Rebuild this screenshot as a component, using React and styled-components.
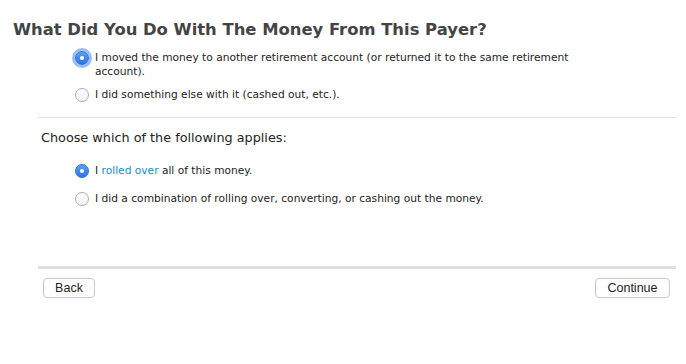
import React, { useState } from 'react';
import styled, { createGlobalStyle } from 'styled-components';

const GlobalStyle = createGlobalStyle`
  html, body {
    margin: 0;
    padding: 0;
    background: #fff;
  }
  body {
    font-family: 'DejaVu Sans', 'Liberation Sans', sans-serif;
    color: #222;
  }
`;

const Page = styled.div`
  width: 686px;
  height: 364px;
  background: #fff;
`;

const Title = styled.h1`
  margin: 0;
  padding: 19px 0 0 13px;
  font-size: 16.4px;
  line-height: 22px;
  font-weight: bold;
  color: #444;
`;

const Section = styled.div`
  margin-left: 38px;
  width: 638px;
`;

const OptionList = styled.div`
  display: flex;
  flex-direction: column;
  gap: ${(props) => props.gap}px;
  margin-top: ${(props) => props.top}px;
  padding-left: 37px;
`;

const Option = styled.label`
  display: flex;
  align-items: flex-start;
  gap: 6px;
  font-size: 10.65px;
  line-height: 14px;
  color: #222;
  cursor: pointer;
  max-width: 500px;
`;

const Radio = styled.span`
  flex: none;
  box-sizing: border-box;
  width: 14px;
  height: 14px;
  border-radius: 50%;
  display: flex;
  align-items: center;
  justify-content: center;
  background: ${(props) =>
    props.checked
      ? 'linear-gradient(#5aa0f7, #2f74e6)'
      : 'linear-gradient(#fff, #f3f3f3)'};
  border: 1px solid ${(props) => (props.checked ? '#2d6fd8' : '#adadad')};
  box-shadow: ${(props) =>
    props.focused ? '0 0 0 3px rgba(96, 156, 240, 0.65)' : 'none'};

  &::after {
    content: '';
    width: 4px;
    height: 4px;
    border-radius: 50%;
    background: #fff;
    display: ${(props) => (props.checked ? 'block' : 'none')};
  }
`;

const Link = styled.a`
  color: #1d8bbd;
  text-decoration: none;
`;

const Divider = styled.hr`
  margin: ${(props) => props.top}px 0 0;
  border: none;
  height: ${(props) => props.size}px;
  background: ${(props) => props.color};
`;

const Prompt = styled.p`
  margin: 12px 0 0 3px;
  font-size: 12.8px;
  line-height: 16px;
  color: #222;
`;

const Footer = styled.div`
  display: flex;
  justify-content: space-between;
  margin-top: 9px;
  padding: 0 6px 0 5px;
`;

const Button = styled.button`
  height: 20px;
  min-width: ${(props) => props.width}px;
  padding: 0 10px;
  border: 1px solid #c9c9c9;
  border-radius: 4px;
  background: #fff;
  font-family: 'Liberation Sans', Arial, sans-serif;
  font-size: 12.5px;
  color: #222;
  cursor: pointer;
`;

function RadioOption({ checked, focused, onSelect, children }) {
  return (
    <Option onClick={onSelect}>
      <Radio checked={checked} focused={focused} />
      <span>{children}</span>
    </Option>
  );
}

export default function App() {
  const [where, setWhere] = useState('moved');
  const [which, setWhich] = useState('rolled');

  return (
    <Page>
      <GlobalStyle />
      <Title>What Did You Do With The Money From This Payer?</Title>
      <Section>
        <OptionList top={10} gap={9}>
          <RadioOption
            checked={where === 'moved'}
            focused={where === 'moved'}
            onSelect={() => setWhere('moved')}
          >
            I moved the money to another retirement account (or returned it to
            the same retirement account).
          </RadioOption>
          <RadioOption
            checked={where === 'else'}
            onSelect={() => setWhere('else')}
          >
            I did something else with it (cashed out, etc.).
          </RadioOption>
        </OptionList>
        <Divider top={15} size={1} color="#e2e2e2" />
        <Prompt>Choose which of the following applies:</Prompt>
        <OptionList top={18} gap={14}>
          <RadioOption
            checked={which === 'rolled'}
            onSelect={() => setWhich('rolled')}
          >
            I <Link href="#">rolled over</Link> all of this money.
          </RadioOption>
          <RadioOption
            checked={which === 'combo'}
            onSelect={() => setWhich('combo')}
          >
            I did a combination of rolling over, converting, or cashing out the
            money.
          </RadioOption>
        </OptionList>
        <Divider top={60} size={3} color="#dedede" />
        <Footer>
          <Button width={52}>Back</Button>
          <Button width={75}>Continue</Button>
        </Footer>
      </Section>
    </Page>
  );
}
